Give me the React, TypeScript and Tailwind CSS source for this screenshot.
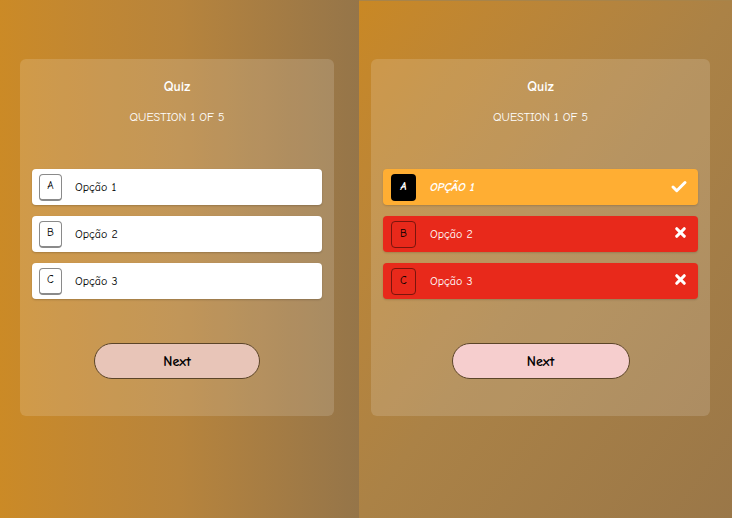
import { Check, X } from "lucide-react";

type Option = {
  letter: string;
  label: string;
};

const options: Option[] = [
  { letter: "A", label: "Opção 1" },
  { letter: "B", label: "Opção 2" },
  { letter: "C", label: "Opção 3" },
];

const font = { fontFamily: '"Comic Sans MS", "Comic Neue", "Open Sans", sans-serif' };

function QuizCard({ answered }: { answered: boolean }) {
  return (
    <div className="flex flex-col items-stretch rounded-md bg-white/15 px-3 pt-[18px] pb-[37px]">
      <h1 className="text-center text-[14px] font-bold leading-5 text-white">Quiz</h1>
      <p className="mt-[10px] text-center text-[12px] leading-5 text-white">
        QUESTION 1 OF 5
      </p>

      <div className="mt-[42px] flex flex-col gap-[11px]">
        {options.map((opt, i) => {
          const correct = i === 0;
          if (!answered) {
            return (
              <div
                key={opt.letter}
                className="flex h-9 items-center rounded-[4px] bg-white pl-[7px] shadow-[0_1px_2px_rgba(0,0,0,0.2)]"
              >
                <span className="flex h-[27px] w-[23px] items-center justify-center rounded-[4px] border border-[#8a8a8a] border-b-2 text-[11px] font-medium text-black">
                  {opt.letter}
                </span>
                <span className="ml-[13px] text-[12px] font-medium text-black">{opt.label}</span>
              </div>
            );
          }
          return (
            <div
              key={opt.letter}
              className={`flex h-9 items-center rounded-[4px] pl-[8px] pr-[10px] shadow-[0_1px_2px_rgba(0,0,0,0.15)] ${
                correct ? "bg-[#ffae33]" : "bg-[#e8291b]"
              }`}
            >
              {correct ? (
                <span className="flex h-[27px] w-[25px] items-center justify-center rounded-[4px] bg-black text-[11px] font-bold italic text-white">
                  {opt.letter}
                </span>
              ) : (
                <span className="flex h-[27px] w-[25px] items-center justify-center rounded-[4px] border border-[#7a150d] text-[11px] font-medium text-black">
                  {opt.letter}
                </span>
              )}
              <span
                className={`ml-[14px] flex-1 text-[12px] text-white ${
                  correct ? "font-bold italic uppercase" : "font-medium"
                }`}
              >
                {opt.label}
              </span>
              {correct ? (
                <Check className="h-[18px] w-[18px] text-white" strokeWidth={4} />
              ) : (
                <X className="mb-[4px] h-[15px] w-[15px] text-white" strokeWidth={5} />
              )}
            </div>
          );
        })}
      </div>

      <div className="mt-[44px] flex justify-center">
        <button
          className={`h-9 rounded-full border border-[#5c4528] text-[14px] font-bold text-black ${
            answered ? "w-[178px] bg-[#f6cece]" : "w-[166px] bg-[#e8c5b8]"
          }`}
        >
          Next
        </button>
      </div>
    </div>
  );
}

export default function App() {
  return (
    <div className="flex h-[518px] w-[732px] overflow-hidden" style={font}>
      <div className="w-[359px] bg-gradient-to-r from-[#cb8a26] via-[#b7843c] to-[#957549] pl-5 pr-[25px] pt-[59px]">
        <QuizCard answered={false} />
      </div>
      <div className="flex-1 border-t border-[#a8844a] bg-gradient-to-br from-[#c98824] via-[#ab8246] to-[#9a7748] pl-[12px] pr-[22px] pt-[58px]">
        <QuizCard answered />
      </div>
    </div>
  );
}
